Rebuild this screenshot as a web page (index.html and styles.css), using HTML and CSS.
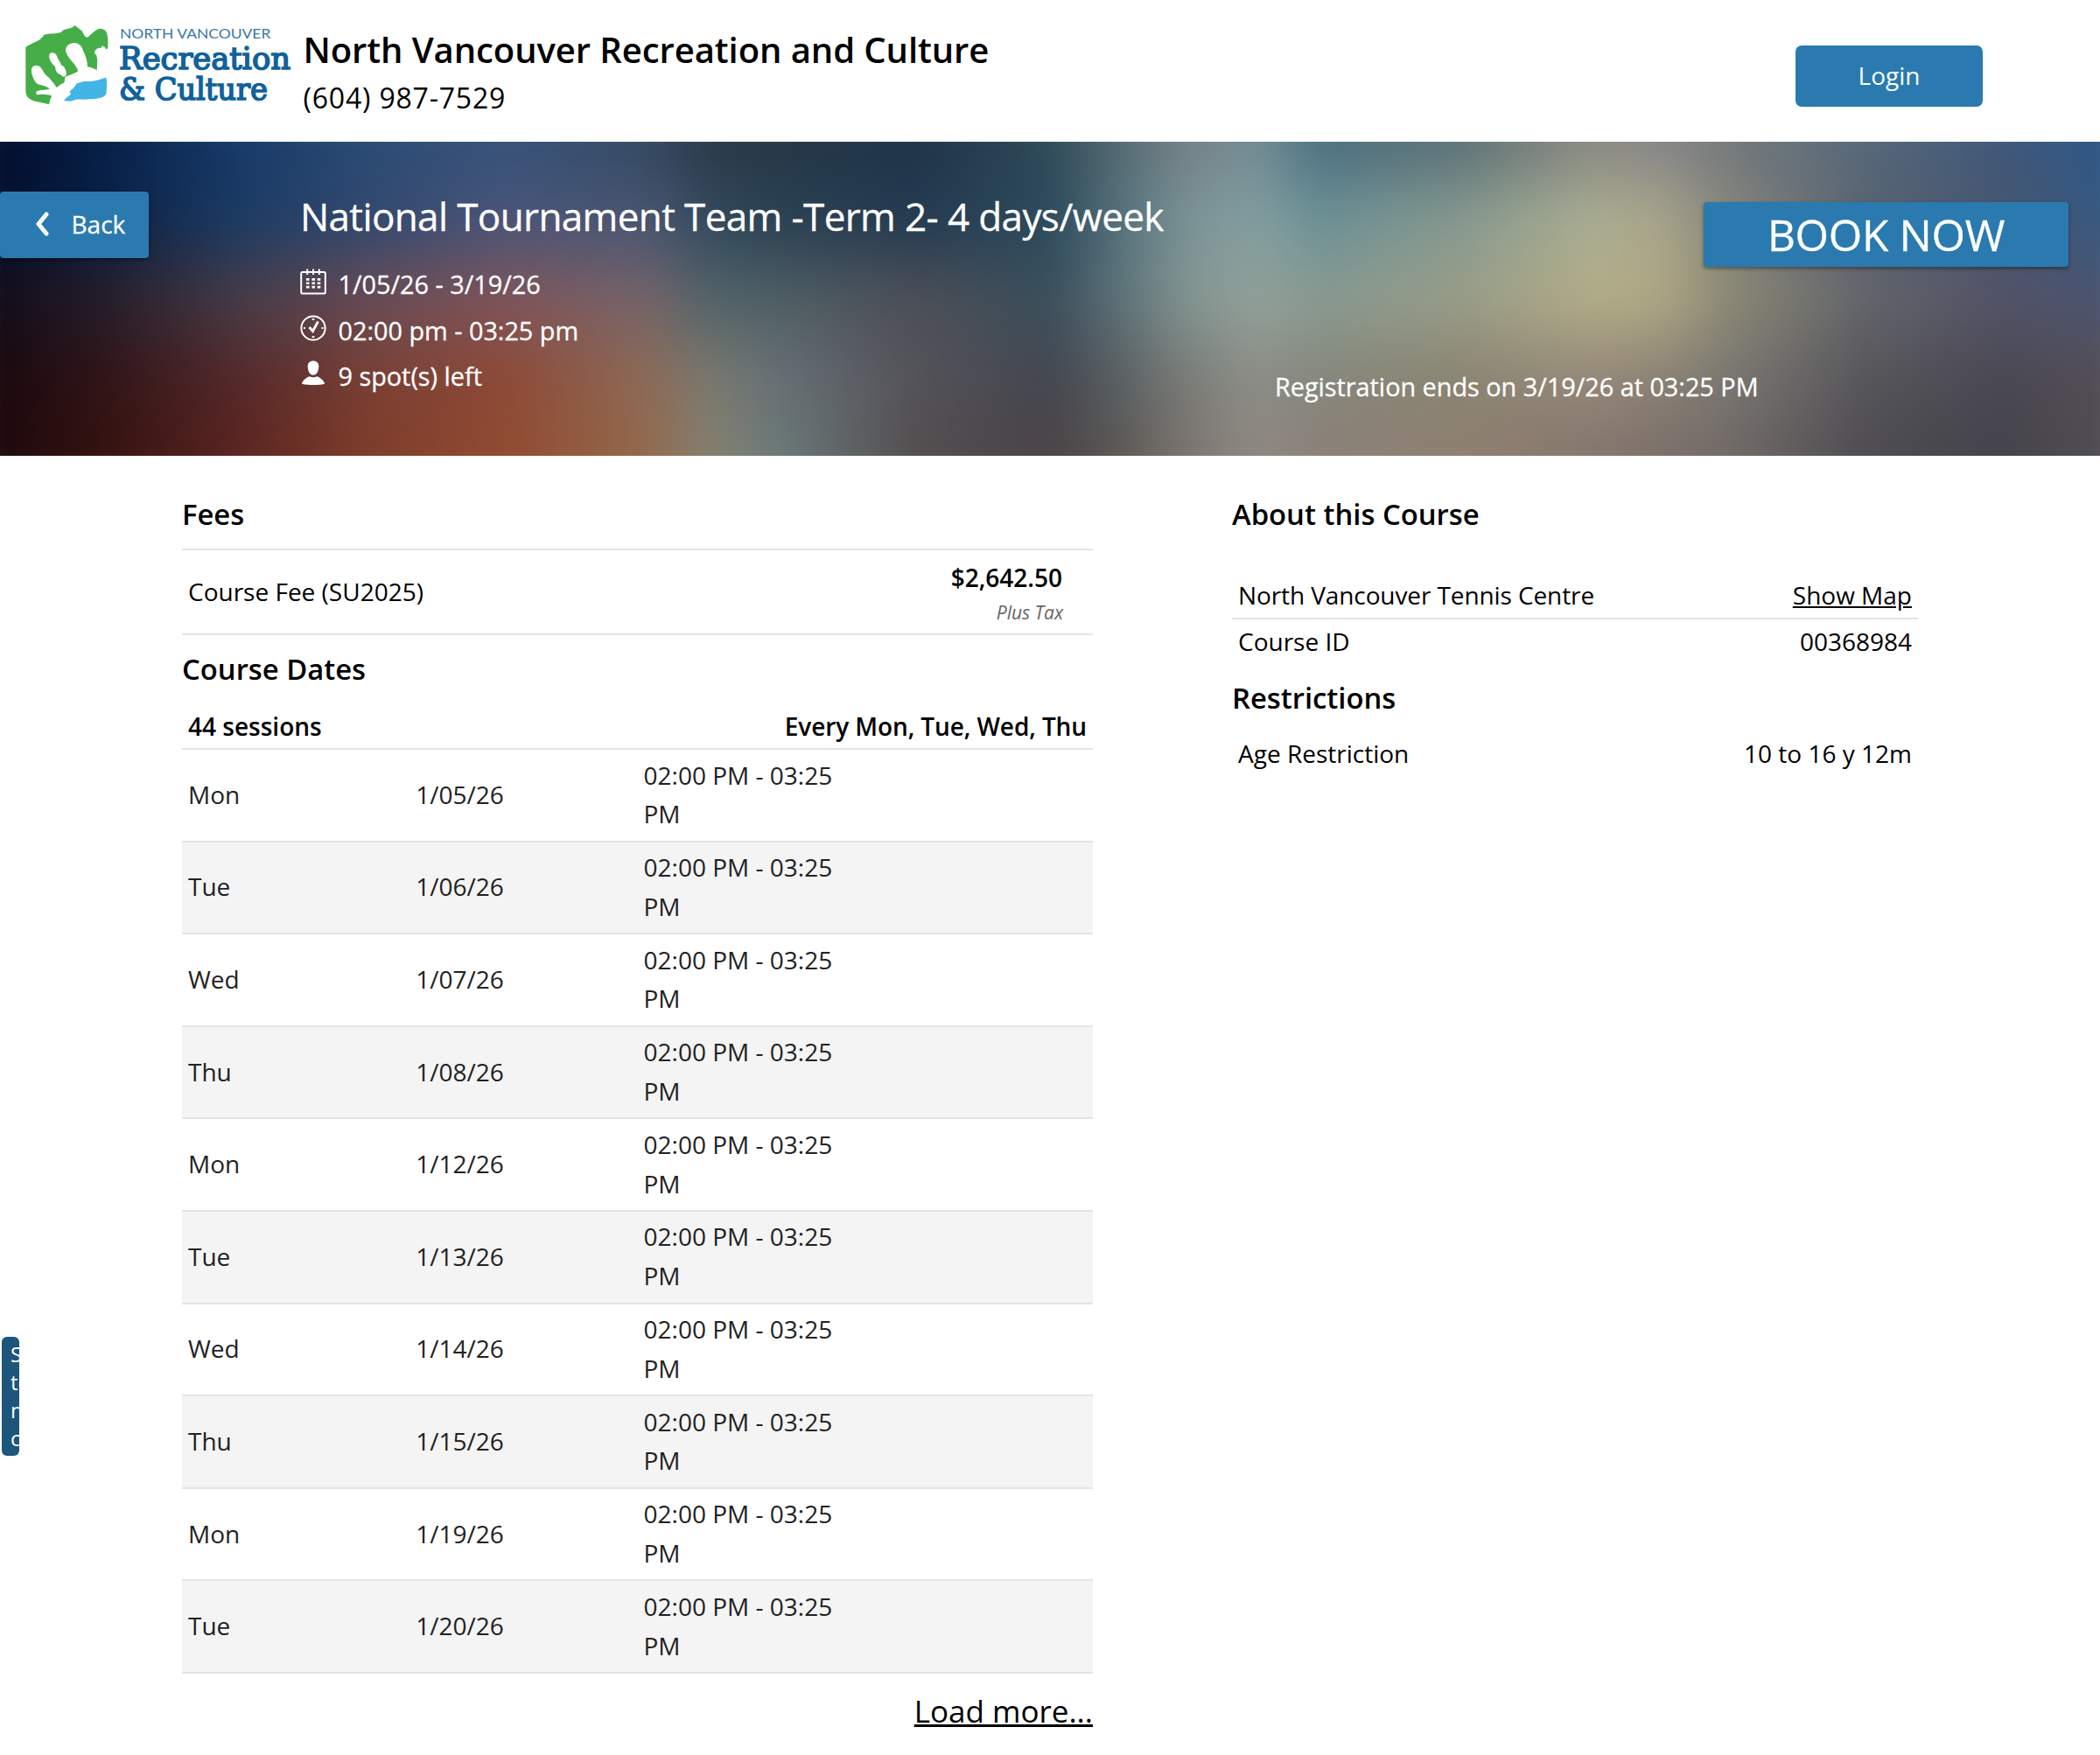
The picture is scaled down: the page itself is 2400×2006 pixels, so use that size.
FILE: index.html
```
<!DOCTYPE html>
<html lang="en">
<head>
<meta charset="utf-8">
<title>National Tournament Team - North Vancouver Recreation and Culture</title>
<link rel="stylesheet" href="styles.css">
</head>
<body>
<header class="site-header">
  <svg class="logo" viewBox="0 0 960 330" role="img" aria-label="North Vancouver Recreation &amp; Culture">
    <path class="logo-green" d="M28 102C50 85 80 82 90 60C108 52 132 58 150 50C162 34 185 42 197 27L222 47C230 66 238 74 246 63C262 50 274 34 290 39C306 43 308 56 310 76L310 100C309 112 302 110 300 102L290 97L286 105L278 104C266 110 262 118 265 124C276 130 274 155 272 182L180 250L118 270C110 278 112 290 108 298C85 290 48 290 34 272C27 262 28 250 28 240Z"/>
    <path class="logo-white" d="M109 128C112 118 128 118 134 130C138 144 147 152 151 164C163 168 164 178 168 190C166 206 156 206 148 196C134 190 130 184 130 170C118 156 106 146 109 128ZM165 116C164 98 178 87 194 87C212 87 222 100 226 116C234 132 240 150 240 169C252 170 262 176 276 182L316 204L304 212L204 226L176 268L160 290L112 299L118 269C100 262 84 264 66 265C60 256 66 249 80 249L112 246C98 238 84 238 70 230C56 218 46 192 48 176C54 160 72 162 80 172C90 186 94 198 108 206C118 218 128 228 134 240C142 236 146 230 156 226C166 222 158 210 166 202C180 198 194 192 208 184C202 160 176 146 165 116Z"/>
    <path class="logo-green" d="M66 228C84 232 98 236 108 242C98 248 80 246 68 252C54 250 54 236 66 228Z"/>
    <path class="logo-blue" d="M159 286C164 276 176 270 184 262C174 254 184 248 192 242C202 222 226 218 244 219C266 220 284 210 304 206C308 222 306 244 304 262C298 276 272 280 246 280C226 284 206 276 188 286C178 290 168 284 159 286Z"/>
    <text class="logo-small" x="351" y="73" textLength="517" lengthAdjust="spacingAndGlyphs">NORTH VANCOUVER</text>
    <text class="logo-big" x="348" y="176" textLength="588" lengthAdjust="spacingAndGlyphs">Recreation</text>
    <text class="logo-big" x="348" y="282" textLength="510" lengthAdjust="spacingAndGlyphs">&amp; Culture</text>
  </svg>
  <div class="org">
    <div class="org-name">North Vancouver Recreation and Culture</div>
    <div class="org-phone">(604) 987-7529</div>
  </div>
  <button class="login">Login</button>
</header>

<section class="hero">
  <div class="backdrop"><i class="band b1"></i><i class="band b2"></i><i class="band b3"></i><i class="band b4"></i><i class="band b5"></i></div>
  <div class="hero-content">
    <button class="back">
      <svg class="chevron" viewBox="0 0 16 28"><path d="M13 3L4 14L13 25"/></svg>Back
    </button>
    <div class="summary">
      <h1 class="title">National Tournament Team -Term 2- 4 days/week</h1>
      <div class="fact">
        <svg class="fact-icon" viewBox="0 0 30 30"><rect class="line" x="1.2" y="4" width="27.6" height="24.6" rx="1.5"/><path class="line" d="M8.2 .5V7M15 .5V7M21.8 .5V7"/><path class="dots" d="M8.700 11V22.500M15.200 11V22.500M21.500 11V22.500"/></svg>
        <span>1/05/26 - 3/19/26</span>
      </div>
      <div class="fact">
        <svg class="fact-icon" viewBox="0 0 30 30"><circle class="line" cx="15" cy="15" r="13.6"/><path class="tick" d="M10.500 14L14.500 18.500L20.500 7.500"/><path class="line" d="M13.700 5H16.300M13.700 25H16.300M5 14V16M25.500 14V16"/></svg>
        <span>02:00 pm - 03:25 pm</span>
      </div>
      <div class="fact">
        <svg class="fact-icon" viewBox="0 0 30 30"><path class="solid" d="M15 .5C18.800 .5 21.500 3 21.300 7C21 12.500 19 16.700 15 16.700C11 16.700 9 12.500 8.700 7C8.500 3 11.200 .5 15 .5ZM1.800 26.500C4 21 8.500 19 11 18.200C13 19.500 17 19.500 19 18.200C21.500 19 26 21 28.300 26.500C24 28.500 6 28.500 1.800 26.500Z"/></svg>
        <span>9 spot(s) left</span>
      </div>
    </div>
    <div class="booking">
      <button class="book">BOOK NOW</button>
      <p class="deadline">Registration ends on 3/19/26 at 03:25 PM</p>
    </div>
  </div>
</section>

<main class="details">
  <section class="left">
    <h2 class="heading">Fees</h2>
    <div class="fee">
      <span class="fee-name">Course Fee (SU2025)</span>
      <div class="price"><strong class="amount">$2,642.50</strong><em class="tax">Plus Tax</em></div>
    </div>
    <h2 class="heading dates-heading">Course Dates</h2>
    <div class="sessions-head"><span>44 sessions</span><span class="weekdays">Every Mon, Tue, Wed, Thu</span></div>
    <div class="sessions">
      <div class="session"><span>Mon</span><span>1/05/26</span><span>02:00 PM - 03:25 PM</span></div>
      <div class="session"><span>Tue</span><span>1/06/26</span><span>02:00 PM - 03:25 PM</span></div>
      <div class="session"><span>Wed</span><span>1/07/26</span><span>02:00 PM - 03:25 PM</span></div>
      <div class="session"><span>Thu</span><span>1/08/26</span><span>02:00 PM - 03:25 PM</span></div>
      <div class="session"><span>Mon</span><span>1/12/26</span><span>02:00 PM - 03:25 PM</span></div>
      <div class="session"><span>Tue</span><span>1/13/26</span><span>02:00 PM - 03:25 PM</span></div>
      <div class="session"><span>Wed</span><span>1/14/26</span><span>02:00 PM - 03:25 PM</span></div>
      <div class="session"><span>Thu</span><span>1/15/26</span><span>02:00 PM - 03:25 PM</span></div>
      <div class="session"><span>Mon</span><span>1/19/26</span><span>02:00 PM - 03:25 PM</span></div>
      <div class="session"><span>Tue</span><span>1/20/26</span><span>02:00 PM - 03:25 PM</span></div>
    </div>
    <div class="more"><a class="link" href="#">Load more...</a></div>
  </section>
  <section class="right">
    <h2 class="heading">About this Course</h2>
    <div class="info venue"><span class="venue-name">North Vancouver Tennis Centre</span><a class="link" href="#">Show Map</a></div>
    <div class="info"><span>Course ID</span><span>00368984</span></div>
    <h2 class="heading restrictions-heading">Restrictions</h2>
    <div class="info age"><span>Age Restriction</span><span>10 to 16 y 12m</span></div>
  </section>
</main>

<a class="skip" href="#">Skip to main content</a>
</body>
</html>
```
FILE: styles.css
```
* { box-sizing: border-box; }

body {
  margin: 0;
  height: 2006px;
  overflow: hidden;
  background: #fff;
  color: #000;
  font-family: "Open Sans", sans-serif;
  font-size: 28px;
}

h1, h2, p { margin: 0; }

button {
  border: 0;
  padding: 0;
  background: #2a7ab0;
  color: #fff;
  font: inherit;
}

/* Header */
.site-header {
  display: flex;
  align-items: flex-start;
  height: 162px;
  padding: 20px 134px 0 20px;
}

.logo { flex: none; width: 320px; height: 110px; }
.logo-green { fill: #45ae49; }
.logo-white { fill: #fff; }
.logo-blue { fill: #42b4e6; }
.logo-small { fill: #3a78a8; font: 400 47px Lato, sans-serif; }
.logo-big { fill: #10619c; stroke: #10619c; stroke-width: 5; font: 108px "DejaVu Serif", serif; }

.org { flex: 1; padding: 7px 0 0 6.5px; }
.org-name { font-size: 40px; font-weight: 600; line-height: 60px; letter-spacing: -.07px; }
.org-phone { font-size: 32px; line-height: 50px; letter-spacing: .8px; }

.login {
  width: 214px;
  height: 70px;
  margin-top: 32px;
  padding-bottom: 2px;
  border-radius: 7px;
}

/* Hero */
.hero { display: grid; height: 359px; overflow: hidden; color: #fff; -webkit-text-stroke: .3px #fff; }
.backdrop, .hero-content { grid-area: 1 / 1; }
.hero-content { z-index: 1; }
.backdrop { display: grid; margin: -40px; filter: blur(20px); }

/* Each band fades in over the one before it, giving a smooth two-way colour blend */
.band { grid-area: 1 / 1; }
.b1 { background: linear-gradient(90deg, #020a28, #052048 6.25%, #173a68 12.5%, #2b4c74 18.75%, #37537a 25%, #354a63 31.25%, #2a3a48 34.4%, #253847 37.5%, #1f3348 43.75%, #2f4a58 50%, #546a72 53.1%, #748187 56.25%, #748d94 59.4%, #4b6f80 62.5%, #5b7177 68.75%, #8a8a80 75%, #86858a 78.1%, #74797a 81.25%, #56697a 87.5%, #40587a 93.75%, #28568a); }
.b2 { background: linear-gradient(90deg, #040a22, #0b1f42 6.25%, #1b3b63 12.5%, #33496f 18.75%, #4b5579 25%, #4a5672 31.25%, #334a5d 34.4%, #2b4152 37.5%, #253b52 43.75%, #2c4a5c 50%, #54707a 53.1%, #7b9397 56.25%, #849ea0 59.4%, #6a9196 62.5%, #86998f 68.75%, #aaae93 75%, #a9a68a 78.1%, #86867d 81.25%, #59626e 87.5%, #48566f 93.75%, #325a85); mask-image: linear-gradient(transparent 9%, #000 29.5%); }
.b3 { background: linear-gradient(90deg, #0d0815, #251d2a 6.25%, #473b47 12.5%, #694c56 18.75%, #80555a 25%, #76646a 31.25%, #526468 34.4%, #4f5f64 37.5%, #4d4f56 43.75%, #3a4f5b 50%, #5c7177 53.1%, #829490 56.25%, #93a29a 59.4%, #899a90 62.5%, #989d88 68.75%, #b3ad87 75%, #b0a883 78.1%, #8c8975 81.25%, #64666b 87.5%, #535367 93.75%, #4a5573); mask-image: linear-gradient(transparent 29.5%, #000 50%); }
.b4 { background: linear-gradient(90deg, #15060b, #301417 6.25%, #54292a 12.5%, #7a4035 18.75%, #8e4a37 25%, #8e6a55 31.25%, #7a7a70 34.4%, #667075 37.5%, #55535a 43.75%, #444650 50%, #585f62 53.1%, #7a7c77 56.25%, #8c8e87 59.4%, #86877c 62.5%, #8a8572 68.75%, #95897a 75%, #8c8275 78.1%, #7a7772 81.25%, #57565a 87.5%, #4a4852 93.75%, #565057); mask-image: linear-gradient(transparent 50%, #000 70.5%); }
.b5 { background: linear-gradient(90deg, #17060c, #34120f 6.25%, #5a2420 12.5%, #7f3d2a 18.75%, #914b31 25%, #93684a 31.25%, #858170 34.4%, #6b7a7a 37.5%, #534e4f 43.75%, #4a4345 50%, #5b5753 53.1%, #7a736e 56.25%, #8f8882 59.4%, #8a8078 62.5%, #8f7f70 68.75%, #85756c 75%, #7c6f6b 78.1%, #706965 81.25%, #4e4c52 87.5%, #44424a 93.75%, #555056); mask-image: linear-gradient(transparent 70.5%, #000 91%); }

.hero-content { display: flex; align-items: flex-start; }

.back {
  display: flex;
  align-items: center;
  gap: 26px;
  width: 170px;
  height: 76px;
  margin-top: 57px;
  padding: 0 0 2px 39.5px;
  border-radius: 4px;
  box-shadow: 0 2px 4px rgba(0, 0, 0, .4);
}
.chevron { width: 16px; height: 28px; fill: none; stroke: #fff; stroke-width: 5; stroke-linecap: round; stroke-linejoin: round; }

.summary { width: 1287px; padding: 55px 0 0 173px; }
.title { margin-bottom: 21px; font-size: 44px; font-weight: 400; line-height: 60px; letter-spacing: -.62px; }
.fact { display: flex; gap: 13.5px; height: 52.5px; font-size: 28.8px; line-height: 53px; }
.fact-icon { flex: none; width: 30px; height: 30px; margin-top: 9px; }
.line { fill: none; stroke: #fff; stroke-width: 2; }
.dots { stroke: #fff; stroke-width: 3.6; stroke-dasharray: 2.7 1.7; }
.tick { fill: none; stroke: #fff; stroke-width: 2.8; }
.solid { fill: #fff; }

.booking { width: 907px; }
.book {
  display: block;
  width: 417px;
  height: 74px;
  margin: 69px 0 0 490px;
  border-radius: 4px;
  box-shadow: 0 2px 4px rgba(0, 0, 0, .4);
  font-size: 49.5px;
  line-height: 72px;
  letter-spacing: -.3px;
}
.deadline { margin-top: 117px; font-size: 28.8px; line-height: 40px; }

/* Course details */
.details { display: flex; gap: 159px; padding: 0 208px; }
.left { width: 1041px; }
.right { width: 784px; }
.heading { padding-top: 44px; font-size: 32.8px; font-weight: 600; line-height: 46px; }

.fee {
  display: flex;
  justify-content: space-between;
  align-items: center;
  height: 99px;
  margin-top: 16px;
  padding: 0 35px 0 7px;
  border-top: 2px solid #e1e5e5;
  border-bottom: 2px solid #e1e5e5;
}
.fee-name { padding-bottom: 2px; }
.price { display: flex; flex-direction: column; align-items: flex-end; padding-top: 6px; line-height: 40px; }
.amount { font-weight: 600; }
.tax { margin-right: -1px; color: #666; font-size: 21px; }

.dates-heading { padding-top: 16px; }
.sessions-head {
  display: flex;
  justify-content: space-between;
  height: 69px;
  padding: 22px 7px 0;
  border-bottom: 2px solid #e1e5e5;
  font-weight: 600;
  line-height: 40px;
}
.weekdays { letter-spacing: -.1px; }

.session {
  display: grid;
  grid-template-columns: repeat(4, 1fr);
  align-items: center;
  height: 105.6px;
  padding-bottom: 1px;
  border-bottom: 2px solid #e1e5e5;
  color: #222;
  line-height: 44.8px;
}
.session:nth-child(even) { background: #f4f4f4; }
.session span { padding: 0 7px; }

.more { padding-top: 18px; text-align: right; font-size: 35px; line-height: 50px; }
.link { color: #000; }

.info { display: flex; justify-content: space-between; padding: 5px 7px 0; line-height: 40px; }
.venue { height: 58px; margin-top: 39px; padding-top: 10px; border-bottom: 2px solid #e1e5e5; }
.venue-name { letter-spacing: -.1px; }
.restrictions-heading { padding-top: 22px; }
.age { padding-top: 20px; }

/* Collapsed accessibility tab on the left edge */
.skip {
  position: absolute;
  top: 1528px;
  left: 2px;
  width: 20px;
  height: 136px;
  padding: 4px 10px;
  overflow: hidden;
  border-radius: 6px;
  background: #1e557b;
  color: #fff;
  font-size: 24px;
  line-height: 32px;
  text-decoration: none;
}
```
